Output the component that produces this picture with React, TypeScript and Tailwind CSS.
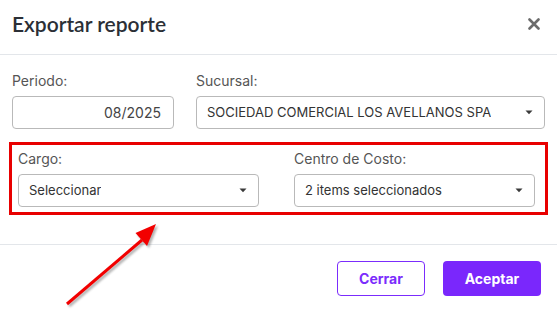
import React from "react";

function Caret() {
  return (
    <svg width="8" height="5" viewBox="0 0 8 5" className="shrink-0">
      <path d="M0.5 0.5 L7.5 0.5 L4 4.3 Z" fill="#3a3a3a" />
    </svg>
  );
}

function Select({ text }: { text: string }) {
  return (
    <div className="h-[33px] border border-[#b9b9b9] rounded-[4px] flex items-center justify-between pl-[10px] pr-[11px] text-[13px] text-[#333]">
      <span className="truncate">{text}</span>
      <Caret />
    </div>
  );
}

export default function App() {
  const sans = { fontFamily: "Inter, 'Noto Sans', sans-serif" };
  return (
    <div className="relative w-[557px] h-[314px] bg-white overflow-hidden" style={sans}>
      <div className="h-[55px] border-b border-[#e3e6ea] flex items-center justify-between pl-3 pr-[17px] pb-[6px]">
        <span
          className="text-[21px] font-semibold text-[#2b2f36]"
          style={{ fontFamily: "Lato, 'Open Sans', sans-serif" }}
        >
          Exportar reporte
        </span>
        <svg width="12" height="12" viewBox="0 0 12 12">
          <path d="M1.5 1.5 L10.5 10.5 M10.5 1.5 L1.5 10.5" stroke="#6b6b6b" strokeWidth="2.6" strokeLinecap="round" />
        </svg>
      </div>

      <div className="h-[190px] border-b border-[#e3e6ea] pt-[17px]">
        <div className="flex px-3 gap-[22px]">
          <div className="w-[162px] flex flex-col">
            <span className="text-[14px] text-[#555] leading-[18px]">Periodo:</span>
            <div className="mt-[6px] h-[33px] border border-[#b9b9b9] rounded-[4px] flex items-center justify-end pr-[12px] text-[14px] text-[#444]">
              08/2025
            </div>
          </div>
          <div className="flex-1 flex flex-col">
            <span className="text-[14px] text-[#555] leading-[18px]">Sucursal:</span>
            <div className="mt-[6px]">
              <Select text="SOCIEDAD COMERCIAL LOS AVELLANOS SPA" />
            </div>
          </div>
        </div>

        <div className="mt-[13px] ml-[9px] w-[539px] border-[3px] border-[#e80000] pl-[6px] pr-[10px] pt-[5px] pb-[5px] grid grid-cols-[241px_241px] gap-x-[35px]">
          <div className="flex flex-col">
            <span className="text-[14px] text-[#555] leading-[18px]">Cargo:</span>
            <div className="mt-[6px]">
              <Select text="Seleccionar" />
            </div>
          </div>
          <div className="flex flex-col">
            <span className="text-[14px] text-[#555] leading-[18px]">Centro de Costo:</span>
            <div className="mt-[6px]">
              <Select text="2 items seleccionados" />
            </div>
          </div>
        </div>
      </div>

      <div className="flex justify-end gap-[18px] pr-4 pt-[16px]">
        <button className="w-[88px] h-[35px] border border-[#7b2cfc] rounded-[4px] text-[#7b2cfc] font-bold text-[14px] bg-white">
          Cerrar
        </button>
        <button className="w-[98px] h-[35px] rounded-[4px] bg-[#7a27fc] text-white font-bold text-[14px]">
          Aceptar
        </button>
      </div>

      <svg className="absolute left-0 top-0 pointer-events-none" width="557" height="314">
        <defs>
          <filter id="sh" x="-20%" y="-20%" width="140%" height="140%">
            <feGaussianBlur stdDeviation="1.2" />
          </filter>
        </defs>
        <g transform="translate(2,2)" filter="url(#sh)" opacity="0.45">
          <line x1="67" y1="304" x2="142" y2="240" stroke="#555" strokeWidth="3" />
          <polygon points="156,224 135.5,233 147,246" fill="#555" />
        </g>
        <line x1="67" y1="304" x2="142" y2="240" stroke="#f20000" strokeWidth="3" />
        <polygon points="156,224 135.5,233 147,246" fill="#f20000" />
      </svg>
    </div>
  );
}
